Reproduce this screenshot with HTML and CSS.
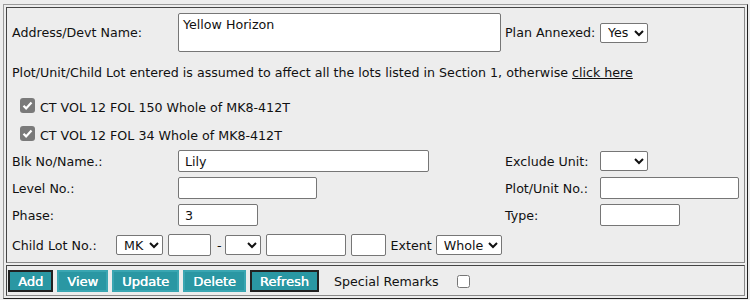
FILE: index.html
```html
<!DOCTYPE html>
<html lang="en">
<head>
  <meta charset="UTF-8" />
  <title>Lot Details</title>
  <link rel="stylesheet" href="styles.css">
</head>
<body>
  <table class="frame">
    <tr>
      <td class="main">
        <div class="grid">
          <label class="lbl">Address/Devt Name:</label>
          <textarea class="addr">Yellow Horizon</textarea>
          <label class="lbl">Plan Annexed:</label>
          <select class="sel-yes"><option>Yes</option><option>No</option></select>
        </div>

        <p class="note">Plot/Unit/Child Lot entered is assumed to affect all the lots listed in Section 1, otherwise <a href="#">click here</a></p>

        <ul class="lots">
          <li><span class="tick"><svg width="15" height="15" viewBox="0 0 15 15"><rect width="15" height="15" rx="3" fill="#7a7a7a"/><path d="M3.5 7.8l2.6 2.6 5.4-6" fill="none" stroke="#fff" stroke-width="2.2"/></svg></span>CT VOL 12 FOL 150 Whole of MK8-412T</li>
          <li><span class="tick"><svg width="15" height="15" viewBox="0 0 15 15"><rect width="15" height="15" rx="3" fill="#7a7a7a"/><path d="M3.5 7.8l2.6 2.6 5.4-6" fill="none" stroke="#fff" stroke-width="2.2"/></svg></span>CT VOL 12 FOL 34 Whole of MK8-412T</li>
        </ul>

        <div class="grid fields">
          <label class="lbl">Blk No/Name.:</label>
          <input type="text" class="w-blk" value="Lily">
          <label class="lbl">Exclude Unit:</label>
          <select class="sel-ex"><option></option></select>

          <label class="lbl">Level No.:</label>
          <input type="text" class="w-level">
          <label class="lbl">Plot/Unit No.:</label>
          <input type="text" class="w-level">

          <label class="lbl">Phase:</label>
          <input type="text" class="w-phase" value="3">
          <label class="lbl">Type:</label>
          <input type="text" class="w-phase">
        </div>

        <div class="child">
          <label class="lbl child-lbl">Child Lot No.:</label>
          <select class="sel-mk"><option>MK</option></select>
          <input type="text" class="w-a">
          <span class="dash">-</span>
          <select class="sel-blank"><option></option></select>
          <input type="text" class="w-b">
          <input type="text" class="w-c">
          <span class="ext">Extent</span>
          <select class="sel-whole"><option>Whole</option></select>
        </div>
      </td>
    </tr>
    <tr>
      <td class="actions">
        <button class="btn active">Add</button>
        <button class="btn">View</button>
        <button class="btn">Update</button>
        <button class="btn">Delete</button>
        <button class="btn active">Refresh</button>
        <span class="remarks">Special Remarks</span>
        <input type="checkbox" class="chk">
      </td>
    </tr>
  </table>
</body>
</html>
```

FILE: styles.css
```css
body {
  margin: 0;
  padding: 4px 2px 0 3px;
  background: #ededed;
  font-family: "DejaVu Sans", sans-serif;
  font-size: 12.65px;
  color: #111;
}

.frame {
  width: 745px;
  border-collapse: separate;
  border-spacing: 2px;
  border: 1px solid;
  border-color: #9a9a9a #222 #222 #9a9a9a;
}

.frame td {
  border: 1px solid;
  border-color: #444 #888 #888 #444;
  padding: 0;
  vertical-align: top;
}

.main {
  padding: 5px 4px 6px 5px !important;
  height: 240px;
}

input, select, textarea, button {
  font-family: inherit;
  font-size: 12.65px;
  color: #111;
}

input[type="text"], textarea {
  border: 1px solid #767676;
  border-radius: 2px;
  background: #fff;
  box-sizing: border-box;
  height: 22px;
  padding: 1px 6px;
  margin: 0;
}

select {
  height: 20px;
  border: 1px solid #767676;
  border-radius: 2px;
  background: #fff;
  margin: 0;
  padding: 0 0 0 3px;
  box-sizing: border-box;
}

.grid {
  display: grid;
  grid-template-columns: 166px 327px 95px 1fr;
  align-items: center;
}

.addr {
  width: 323px;
  height: 39px;
  resize: none;
  padding: 3px 4px;
  margin: 0;
}

.sel-yes { width: 48px; }

.note {
  margin: 11px 0 0;
  line-height: 20px;
}

.note a {
  color: #111;
}

.lots {
  list-style: none;
  margin: 10px 0 0;
  padding: 0 0 0 8px;
}

.lots li {
  display: flex;
  align-items: center;
  height: 28px;
  gap: 5px;
}

.tick {
  display: flex;
  margin-top: -4px;
}

.fields {
  row-gap: 5px;
  margin-top: 1px;
}

.w-blk { width: 251px; }
.w-level { width: 139px; }
.w-phase { width: 80px; }
.sel-ex { width: 48px; }

.child {
  display: flex;
  align-items: center;
  gap: 5px;
  margin-top: 8px;
}

.child-lbl { width: 99px; }
.sel-mk { width: 47px; }
.w-a { width: 43px; }
.dash { margin: 0 -2px 0 1px; }
.sel-blank { width: 36px; }
.w-b { width: 80px; }
.w-c { width: 35px; }
.ext { margin-right: -1px; }
.sel-whole { width: 66px; }

.actions {
  padding: 4px 2px 3px 1px !important;
  display: flex;
  align-items: center;
}

.btn {
  background: #2a97a3;
  color: #fff;
  border: 2px solid #3aa6b2;
  height: 22px;
  padding: 0 8px;
  margin-right: 4px;
  font-size: 13px;
  font-weight: normal;
  text-shadow: 0.4px 0 0 #fff;
}

.btn.active {
  border-color: #222;
}

.remarks {
  margin-left: 11px;
  margin-right: 18px;
}

.chk {
  width: 13px;
  height: 13px;
  margin: 0;
}
```
